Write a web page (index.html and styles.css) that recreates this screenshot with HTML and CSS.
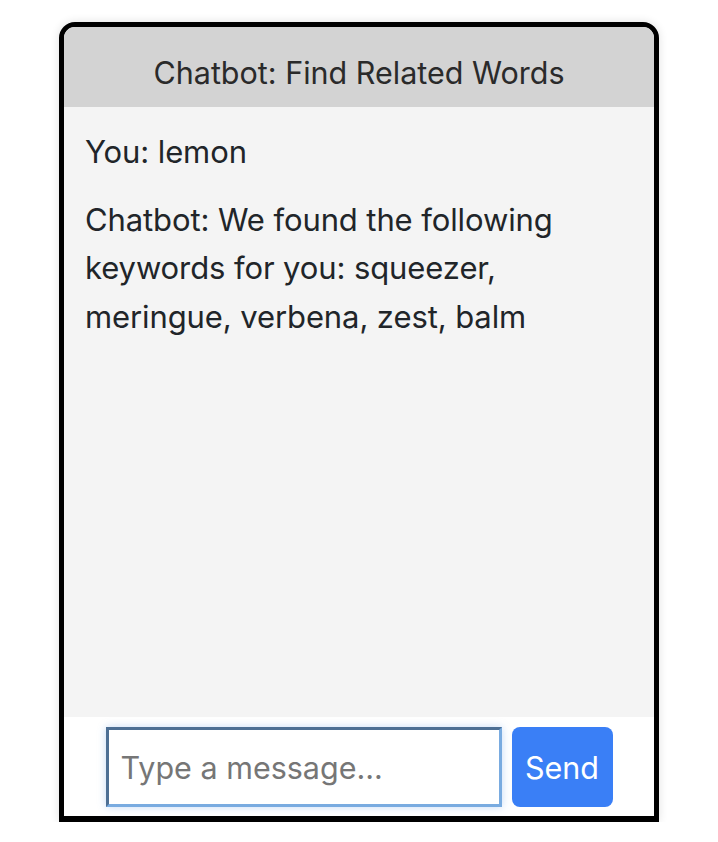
FILE: index.html
```html
<!DOCTYPE html>
<html lang="en">
<head>
<meta charset="utf-8">
<title>Chatbot: Find Related Words</title>
<link rel="stylesheet" href="styles.css">
</head>
<body>
<div class="chat">
  <div class="chat-header">Chatbot: Find Related Words</div>
  <div class="chat-messages">
    <div class="msg">You: lemon</div>
    <div class="msg">Chatbot: We found the following keywords for you: squeezer, meringue, verbena, zest, balm</div>
  </div>
  <div class="chat-input">
    <input class="msg-input" type="text" placeholder="Type a message..." autofocus>
    <button class="send-btn">Send</button>
  </div>
</div>
</body>
</html>
```
FILE: styles.css
```css
html, body {
  margin: 0;
  padding: 0;
  background: #ffffff;
}
body {
  font-family: Inter, "Noto Sans", "Liberation Sans", sans-serif;
  color: #212529;
  padding-top: 22px;
}
.chat {
  box-sizing: border-box;
  width: 600px;
  height: 800px;
  margin: 0 auto;
  border: 5px solid #000;
  border-bottom-width: 6px;
  border-radius: 16px 16px 0 0;
  box-shadow: 0 0 10px rgba(0, 0, 0, 0.12);
  display: flex;
  flex-direction: column;
  overflow: hidden;
  background: #fff;
}
.chat-header {
  height: 80px;
  box-sizing: border-box;
  flex: none;
  background: #d3d3d3;
  padding: 26px 0 14px;
  line-height: 40px;
  text-align: center;
  font-size: 30.5px;
  color: #2a2a2a;
}
.chat-messages {
  flex: 1;
  background: #f4f4f4;
  padding: 21px 21px 20px;
  font-size: 31px;
  line-height: 48.5px;
  letter-spacing: -0.1px;
}
.msg {
  margin-bottom: 19px;
}
.chat-input {
  flex: none;
  height: 99px;
  box-sizing: border-box;
  padding: 10px 0 9px;
  display: flex;
  justify-content: center;
  gap: 10px;
  background: #fff;
}
.msg-input {
  box-sizing: border-box;
  width: 396px;
  height: 80px;
  border: 3px solid;
  border-color: #4d6f94 #79abe0 #79abe0 #4d6f94;
  box-shadow: 0 0 8px rgba(90, 150, 230, 0.35);
  outline: none;
  padding: 0 12px;
  font-family: Inter, "Noto Sans", "Liberation Sans", sans-serif;
  font-size: 30.5px;
  color: #212529;
  caret-color: #000;
  background: #fff;
}
.msg-input::placeholder {
  color: #767676;
}
.send-btn {
  box-sizing: border-box;
  width: 101px;
  height: 80px;
  border: none;
  border-radius: 8px;
  background: #3a7ff6;
  color: #fff;
  font-family: Inter, "Noto Sans", "Liberation Sans", sans-serif;
  font-size: 30.5px;
  padding: 0;
  cursor: pointer;
}
```
